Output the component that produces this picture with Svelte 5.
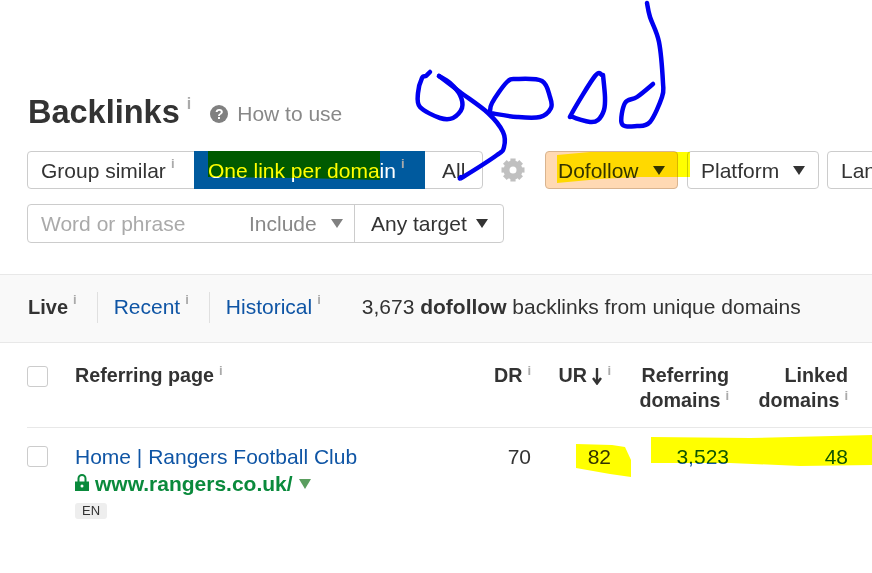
<script>
	// ink strokes drawn over the screenshot, as point lists
	const strokes = [
		[[430, 72], [426, 76], [422, 78], [418, 93], [420, 107], [440, 118], [453, 118], [462, 108], [460, 95], [450, 83], [439, 76]],
		[[439, 76], [460, 92], [488, 113], [503, 132], [504, 147], [497, 155], [463, 177], [461, 177]],
		[[490, 113], [492, 103], [507, 82], [517, 79], [542, 81], [550, 97], [551, 108], [540, 117], [517, 117], [490, 113]],
		[[602, 75], [595, 76], [572, 113], [573, 117], [590, 122], [598, 120], [604, 110], [605, 97], [603, 75]],
		[[647, 3], [650, 17], [659, 42], [663, 83], [662, 97], [650, 122], [637, 126], [622, 124], [625, 103], [637, 97], [653, 84]]
	];

	// catmull-rom through the points so the pen line stays on them
	const curve = (pts) => {
		let d = `M${pts[0][0]} ${pts[0][1]}`;
		for (let i = 0; i < pts.length - 1; i++) {
			const p0 = pts[i - 1] || pts[i];
			const p1 = pts[i];
			const p2 = pts[i + 1];
			const p3 = pts[i + 2] || p2;
			const c1x = p1[0] + (p2[0] - p0[0]) / 6;
			const c1y = p1[1] + (p2[1] - p0[1]) / 6;
			const c2x = p2[0] - (p3[0] - p1[0]) / 6;
			const c2y = p2[1] - (p3[1] - p1[1]) / 6;
			d += ` C${c1x} ${c1y} ${c2x} ${c2y} ${p2[0]} ${p2[1]}`;
		}
		return d;
	};

	const teeth = [0, 45, 90, 135, 180, 225, 270, 315];
</script>

<div class="page">
	<header class="title-row">
		<h1>Backlinks<sup class="i">i</sup></h1>
		<span class="help">?</span>
		<span class="how">How to use</span>
	</header>

	<div class="toolbar">
		<div class="segments">
			<span class="seg">Group similar<sup class="i">i</sup></span>
			<span class="seg active">One link per domain<sup class="i">i</sup></span>
			<span class="seg all">All</span>
		</div>
		<svg class="gear" viewBox="0 0 24 24" width="24" height="24">
			{#each teeth as a}
				<rect x="9.4" y="0.5" width="5.2" height="6" fill="#c0c0c0" transform="rotate({a} 12 12)" />
			{/each}
			<circle cx="12" cy="12" r="6.5" fill="none" stroke="#c0c0c0" stroke-width="6" />
		</svg>
		<button class="drop on">Dofollow<span class="tri"></span></button>
		<button class="drop">Platform<span class="tri"></span></button>
		<button class="drop">Language<span class="tri"></span></button>
	</div>

	<div class="filter">
		<span class="word">Word or phrase</span>
		<span class="include">Include<span class="tri gray"></span></span>
		<span class="target">Any target<span class="tri"></span></span>
	</div>

	<nav class="band">
		<span class="tab live">Live<sup class="i">i</sup></span>
		<span class="tab"><a href="#recent">Recent</a><sup class="i">i</sup></span>
		<span class="tab"><a href="#historical">Historical</a><sup class="i">i</sup></span>
		<span class="summary">3,673 <b>dofollow</b> backlinks from unique domains</span>
	</nav>

	<div class="grid head">
		<span class="box"></span>
		<span class="left">Referring page<sup class="i">i</sup></span>
		<span>DR<sup class="i">i</sup></span>
		<span>UR
			<svg class="arrow" viewBox="0 0 10 17" width="10" height="17">
				<path d="M5 0V15M1 10L5 15.5L9 10" fill="none" stroke="#333" stroke-width="2.4" />
			</svg><sup class="i">i</sup></span>
		<span>Referring<br />domains<sup class="i">i</sup></span>
		<span>Linked<br />domains<sup class="i">i</sup></span>
	</div>

	<div class="grid row">
		<span class="box"></span>
		<div class="left">
			<a class="page-title" href="#home">Home | Rangers Football Club</a>
			<div class="url">
				<svg class="lock" viewBox="0 0 14 17" width="14" height="17">
					<path d="M3.5 8V4.5a3.5 3.5 0 0 1 7 0V8" fill="none" stroke="#0a8a3c" stroke-width="2" />
					<path d="M0 7.5h14v9.5h-14z" fill="#0a8a3c" />
					<circle cx="7" cy="12" r="1.5" fill="#fff" />
				</svg>
				<span>www.rangers.co.uk/</span>
				<svg viewBox="0 0 12 10" width="12" height="10"><path d="M0 0H12L6 10Z" fill="#5a9e5f" /></svg>
			</div>
			<span class="lang">EN</span>
		</div>
		<span>70</span>
		<span>82</span>
		<a href="#domains">3,523</a>
		<a href="#linked">48</a>
	</div>

	<!-- highlighter and pen marks on top of the page -->
	<svg class="ink" viewBox="0 0 872 573" width="872" height="573">
		<g class="marker">
			<path d="M208 151H380V180L300 178L208 177Z" />
			<path d="M557 155L590 152H690V177H640L600 179L557 183Z" />
			<path d="M576 444L612 445L625 447L631 460V477L610 474L576 468Z" />
			<path d="M651 437L750 438L872 435V465L800 466L730 463H651Z" />
		</g>
		{#each strokes as s}
			<path class="pen" d={curve(s)} />
		{/each}
	</svg>
</div>

<style>
	:global(body) {
		margin: 0;
	}

	.page {
		position: relative;
		width: 872px;
		height: 573px;
		overflow: hidden;
		background: #fff;
		font-family: 'Liberation Sans', Arial, sans-serif;
		font-size: 21px;
		color: #333;
	}

	a {
		color: #0f55a5;
		text-decoration: none;
	}

	.i {
		font-size: 13px;
		font-weight: 700;
		color: #aaa;
		margin-left: 5px;
		line-height: 0;
		vertical-align: 7px;
	}

	.title-row {
		display: flex;
		align-items: center;
		padding: 93px 0 0 28px;
		height: 38px;
	}

	h1 {
		margin: 0;
		font-size: 32.5px;
		line-height: 38px;
	}

	h1 .i {
		font-size: 16px;
		vertical-align: 14px;
		margin-left: 7px;
	}

	.help {
		display: flex;
		align-items: center;
		justify-content: center;
		width: 18px;
		height: 18px;
		margin: 4px 9px 0 19px;
		border-radius: 50%;
		background: #808080;
		color: #fff;
		font-size: 14px;
		font-weight: 700;
	}

	.how {
		margin-top: 4px;
		color: #888;
	}

	.toolbar {
		display: flex;
		align-items: center;
		width: 1000px;
		margin: 20px 0 0 27px;
		height: 38px;
	}

	.segments {
		display: flex;
		height: 38px;
		box-sizing: border-box;
		border: 1px solid #ccc;
		border-radius: 4px;
	}

	.seg {
		display: flex;
		align-items: center;
		box-sizing: border-box;
		width: 166px;
		padding: 1px 0 0 13px;
		white-space: nowrap;
	}

	.seg sup {
		align-self: center;
		margin-top: -14px;
		line-height: 14px;
	}

	.seg.active {
		width: 231px;
		margin: -1px 0;
		padding-left: 14px;
		background: #005a9e;
		color: #fff;
	}

	.seg.all {
		width: 57px;
		padding-left: 17px;
	}

	.gear {
		margin: 0 20px 0 18px;
		flex: none;
	}

	.drop {
		display: flex;
		align-items: center;
		justify-content: space-between;
		flex: none;
		width: 132px;
		height: 38px;
		margin-right: 8px;
		padding: 1px 13px 0;
		border: 1px solid #ccc;
		border-radius: 4px;
		background: #fff;
		font: inherit;
		color: inherit;
	}

	.drop.on {
		width: 133px;
		margin-right: 9px;
		padding: 1px 12px 0;
		background: #ffd9b3;
		border-color: #d9b48f;
	}

	.tri {
		display: inline-block;
		width: 0;
		height: 0;
		border: 6px solid transparent;
		border-top: 9px solid #333;
		border-bottom: 0;
	}

	.tri.gray {
		border-top-color: #808080;
	}

	.filter {
		display: flex;
		align-items: center;
		box-sizing: border-box;
		width: 477px;
		height: 39px;
		margin: 15px 0 0 27px;
		border: 1px solid #ccc;
		border-radius: 4px;
	}

	.word {
		width: 208px;
		padding-left: 13px;
		color: #aaa;
		white-space: nowrap;
	}

	.include {
		display: flex;
		align-items: center;
		justify-content: space-between;
		box-sizing: border-box;
		width: 106px;
		height: 100%;
		padding-right: 11px;
		color: #888;
		border-right: 1px solid #ccc;
	}

	.target {
		display: flex;
		align-items: center;
		gap: 9px;
		padding-left: 16px;
		white-space: nowrap;
	}

	.band {
		display: flex;
		align-items: center;
		box-sizing: border-box;
		height: 69px;
		margin-top: 31px;
		padding: 0 0 3px 28px;
		background: #f9f9f9;
		border-top: 1px solid #e8e8e8;
		border-bottom: 1px solid #e8e8e8;
	}

	.tab {
		display: flex;
		align-items: center;
		height: 31px;
		padding-right: 20px;
		margin-right: 16px;
		border-right: 1px solid #e0e0e0;
	}

	.tab sup {
		margin-top: -14px;
		line-height: 14px;
	}

	.tab.live {
		font-weight: 700;
		font-size: 20px;
	}

	.tab:nth-child(3) {
		border-right: 0;
		padding-right: 0;
		margin-right: 41px;
	}

	.summary {
		white-space: nowrap;
	}

	.grid {
		display: grid;
		grid-template-columns: 48px 1fr 60px 80px 118px 119px;
		width: 821px;
		margin-left: 27px;
		text-align: right;
	}

	.head {
		height: 85px;
		box-sizing: border-box;
		padding-top: 20px;
		width: 845px;
		margin-left: 27px;
		padding-right: 24px;
		border-bottom: 1px solid #e8e8e8;
		font-weight: 700;
		font-size: 19.7px;
		line-height: 25px;
	}

	.box {
		box-sizing: border-box;
		width: 21px;
		height: 21px;
		margin-top: 3px;
		border: 1px solid #ccc;
		border-radius: 3px;
		background: #fff;
	}

	.left {
		text-align: left;
	}

	.arrow {
		vertical-align: -3px;
	}

	.row {
		padding-top: 17px;
		line-height: 24px;
	}

	.row .box {
		margin-top: 1px;
	}

	.url {
		display: flex;
		align-items: center;
		gap: 6px;
		margin-top: 3px;
		color: #0a8a3c;
		font-weight: 700;
	}

	.lock {
		margin-top: -3px;
	}

	.lang {
		display: inline-block;
		margin-top: 5px;
		padding: 0 7px;
		background: #eee;
		border-radius: 3px;
		font-size: 13px;
		line-height: 16px;
	}

	.ink {
		position: absolute;
		left: 0;
		top: 0;
		pointer-events: none;
	}

	.marker {
		fill: #ffff00;
		mix-blend-mode: multiply;
	}

	.pen {
		fill: none;
		stroke: #0000f0;
		stroke-width: 4.5;
		stroke-linecap: round;
		stroke-linejoin: round;
	}
</style>
